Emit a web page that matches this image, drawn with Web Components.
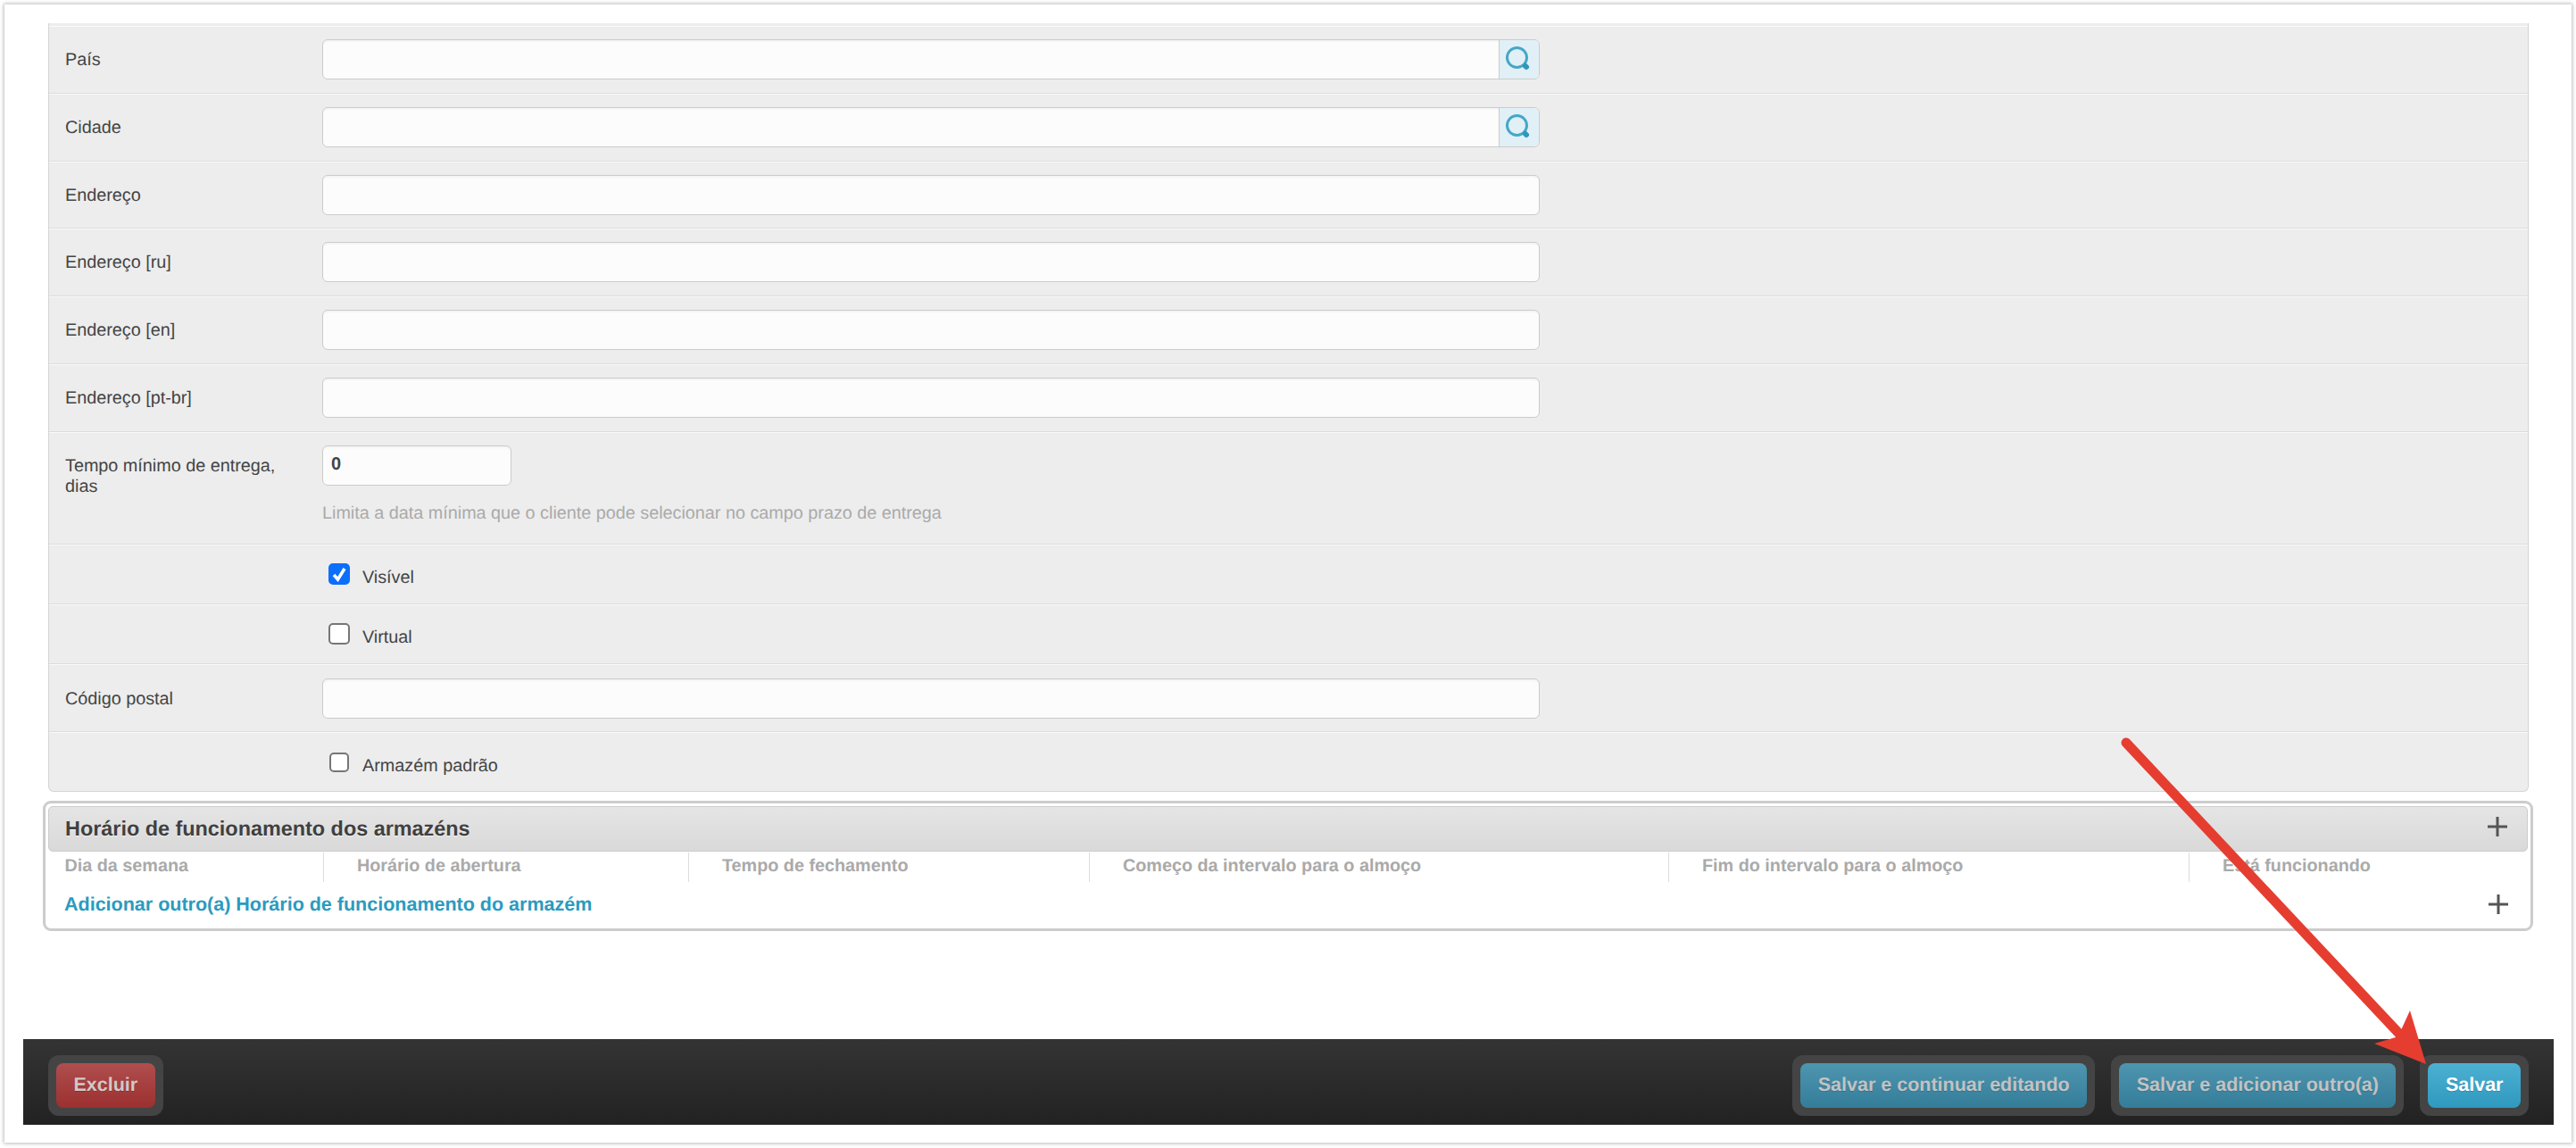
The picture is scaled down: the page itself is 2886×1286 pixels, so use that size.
<!DOCTYPE html>
<html lang="pt-BR">
<head>
<meta charset="utf-8">
<title>Armazém</title>
<style>
    html, body { margin: 0; padding: 0; background: #fff; }
    body { font-family: "Liberation Sans", Arial, sans-serif; font-size: 20px; color: #444; width: 2886px; height: 1286px; overflow: hidden; position: relative; text-rendering: geometricPrecision; }
</style>
</head>
<body>
<admin-page>
    <form-panel>
        <form-row label="País"><text-box lookup></text-box></form-row>
        <form-row label="Cidade"><text-box lookup></text-box></form-row>
        <form-row label="Endereço"><text-box></text-box></form-row>
        <form-row label="Endereço [ru]"><text-box></text-box></form-row>
        <form-row label="Endereço [en]"><text-box></text-box></form-row>
        <form-row label="Endereço [pt-br]"><text-box></text-box></form-row>
        <form-row label="Tempo mínimo de entrega, dias" size="126" help="Limita a data mínima que o cliente pode selecionar no campo prazo de entrega"><text-box small>0</text-box></form-row>
        <form-row size="67"><check-box checked>Visível</check-box></form-row>
        <form-row size="67"><check-box>Virtual</check-box></form-row>
        <form-row label="Código postal" style="padding-top: 15px"><text-box></text-box></form-row>
        <form-row size="66" last><check-box tiny>Armazém padrão</check-box></form-row>
    </form-panel>
    <inline-group title="Horário de funcionamento dos armazéns" link="Adicionar outro(a) Horário de funcionamento do armazém">
        <col-head width="308">Dia da semana</col-head>
        <col-head width="409">Horário de abertura</col-head>
        <col-head width="449">Tempo de fechamento</col-head>
        <col-head width="649">Começo da intervalo para o almoço</col-head>
        <col-head width="583">Fim do intervalo para o almoço</col-head>
        <col-head width="360">Está funcionando</col-head>
    </inline-group>
    <submit-bar>
        <action-button slot="left" kind="danger">Excluir</action-button>
        <action-button kind="dim">Salvar e continuar editando</action-button>
        <action-button kind="dim">Salvar e adicionar outro(a)</action-button>
        <action-button>Salvar</action-button>
    </submit-bar>
</admin-page>
<red-arrow></red-arrow>

<script>
(function() {

    function define(tag, css, html, init) {
        const template = document.createElement('template')
        template.innerHTML = `<style>${css}</style>${html}`

        class Element extends HTMLElement {
            constructor() {
                super()
                this.attachShadow({mode: 'open'})
                this.shadowRoot.appendChild(template.content.cloneNode(true))
            }
            connectedCallback() {
                if (init) init(this, this.shadowRoot)
            }
        }
        window.customElements.define(tag, Element)
    }

    const plus = `<svg width="22" height="22" viewBox="0 0 22 22"><path d="M0 11H22M11 0V22" stroke="#555" stroke-width="3" fill="none"/></svg>`

    define('admin-page', `
        :host {
            display: block;
            box-sizing: border-box;
            width: 2876px;
            height: 1275px;
            margin: 5px 0 0 5px;
            padding-top: 21px;
            background: #fff;
            box-shadow: 0 0 4px 1px #bbb;
        }
    `, `<slot></slot>`)

    define('form-panel', `
        :host {
            display: block;
            box-sizing: border-box;
            width: 2779px;
            height: 861px;
            margin-left: 49px;
            padding-top: 3px;
            background: #ededed;
            border: 1px solid #d4d4d4;
            border-top: 0;
            border-radius: 0 0 6px 6px;
        }
    `, `<slot></slot>`)

    define('form-row', `
        :host {
            display: flex;
            box-sizing: border-box;
            height: var(--row, 75.8px);
            padding: 14px 0 0 18px;
            border-top: 1px solid #fafafa;
            border-bottom: 1px solid #dcdcdc;
        }
        :host([last]) { border-bottom: 0; }
        .label {
            flex: none;
            box-sizing: border-box;
            width: 288px;
            padding: 12px 20px 0 0;
            font-size: 19.800px;
            line-height: 23px;
            color: #444;
        }
        .help {
            margin-top: 20px;
            font-size: 19.800px;
            line-height: 23px;
            color: #aaa;
        }
        .help:empty { display: none; }
    `, `<div class="label"></div><div class="field"><slot></slot><div class="help"></div></div>`, (el, root) => {
        root.querySelector('.label').textContent = el.getAttribute('label') || ''
        root.querySelector('.help').textContent = el.getAttribute('help') || ''
        if (el.hasAttribute('size')) el.style.setProperty('--row', el.getAttribute('size') + 'px')
    })

    define('text-box', `
        :host {
            display: flex;
            box-sizing: border-box;
            width: 1364px;
            height: 45px;
            overflow: hidden;
            background: #fcfcfc;
            border: 1px solid #cbcbcb;
            border-radius: 6px;
            box-shadow: inset 0 3px 3px -2px #eee;
        }
        :host([small]) { width: 212px; }
        .value {
            flex: 1;
            padding-left: 9px;
            font-size: 20px;
            font-weight: bold;
            line-height: 41px;
            color: #444;
        }
        .addon {
            display: none;
            flex: none;
            width: 44px;
            background: #e1f0f6;
            border-left: 1px solid #cbcbcb;
        }
        :host([lookup]) .addon { display: block; }
        svg { display: block; }
    `, `<div class="value"><slot></slot></div>
        <div class="addon"><svg width="44" height="43" viewBox="0 0 44 43">
            <circle cx="19.500" cy="19.500" r="11" fill="none" stroke="#45a7c8" stroke-width="3"/>
            <path d="M27.500 27.500L30 30" stroke="#45a7c8" stroke-width="3" fill="none"/>
            <path d="M29 29L30 30" stroke="#2f97ba" stroke-width="6" stroke-linecap="round" fill="none"/>
        </svg></div>`)

    define('check-box', `
        :host {
            display: flex;
            align-items: flex-start;
            padding: 6px 0 0 7px;
            font-size: 19.800px;
            line-height: 23px;
            color: #444;
        }
        .box {
            flex: none;
            box-sizing: border-box;
            width: 24px;
            height: 24px;
            margin-right: 14px;
            background: #fff;
            border: 2px solid #767676;
            border-radius: 5px;
        }
        :host([tiny]) { padding-left: 8px; padding-top: 8px; }
        :host([tiny]) .box { width: 22px; height: 22px; margin-right: 15px; }
        :host([checked]) .box { background: #0b6ffb; border-color: #0b6ffb; }
        svg { display: none; margin: -2px; }
        :host([checked]) svg { display: block; }
        .text { padding-top: 5px; }
        :host([tiny]) .text { padding-top: 4px; }
    `, `<div class="box"><svg width="24" height="24" viewBox="0 0 24 24"><path d="M6 13L10.500 18L18 6" fill="none" stroke="#fff" stroke-width="3.500"/></svg></div><div class="text"><slot></slot></div>`)

    define('inline-group', `
        :host {
            display: block;
            box-sizing: border-box;
            width: 2790px;
            height: 146px;
            margin: 10px 0 0 43px;
            padding: 3px 3px 0;
            border: 3px solid #ccc;
            border-radius: 9px;
        }
        .head {
            display: flex;
            align-items: center;
            justify-content: space-between;
            box-sizing: border-box;
            height: 51px;
            padding: 0 22px 0 18px;
            background: linear-gradient(#e5e5e5, #d9d9d9);
            border: 1px solid #ccc;
            border-radius: 5px;
        }
        .head svg { margin-bottom: 5px; }
        .title {
            font-size: 23.400px;
            font-weight: bold;
            color: #404040;
            text-shadow: 0 1px 0 #f4f4f4;
        }
        .cols { display: flex; height: 33px; margin-top: 1px; }
        .add {
            display: flex;
            align-items: center;
            justify-content: space-between;
            height: 50px;
            padding: 0 22px 0 18px;
        }
        .link {
            font-size: 21.500px;
            font-weight: bold;
            color: #2b9bc0;
        }
        svg { display: block; }
    `, `<div class="head"><span class="title"></span>${plus}</div>
        <div class="cols"><slot></slot></div>
        <div class="add"><span class="link"></span>${plus}</div>`, (el, root) => {
        root.querySelector('.title').textContent = el.getAttribute('title')
        root.querySelector('.link').textContent = el.getAttribute('link')
        el.removeAttribute('title')
    })

    define('col-head', `
        :host {
            display: block;
            box-sizing: border-box;
            flex: none;
            padding-left: 37px;
            font-size: 19.800px;
            font-weight: bold;
            line-height: 31px;
            color: #aaa;
            border-left: 1px solid #ddd;
        }
        :host(:first-child) { padding-left: 18.500px; border-left: 0; }
    `, `<slot></slot>`, (el) => {
        el.style.width = el.getAttribute('width') + 'px'
    })

    define('submit-bar', `
        :host {
            display: flex;
            justify-content: space-between;
            box-sizing: border-box;
            width: 2835px;
            height: 96px;
            margin: 121px 0 0 21px;
            padding: 18px 28px 0;
            background: linear-gradient(#343434, #222);
        }
        .right { display: flex; gap: 18px; }
    `, `<slot name="left"></slot><div class="right"><slot></slot></div>`)

    define('action-button', `
        :host {
            display: block;
            box-sizing: border-box;
            height: 68px;
            padding: 9px;
            background: #444;
            border-radius: 12px;
        }
        .btn {
            box-sizing: border-box;
            height: 50px;
            padding: 0 19.500px;
            font-size: 21.500px;
            font-weight: bold;
            line-height: 48px;
            color: #fff;
            text-shadow: 0 1px 0 rgba(0, 0, 0, .2);
            background: linear-gradient(#4db0d2, #2f99bf);
            border-radius: 8px;
        }
        :host([kind=dim]) .btn {
            color: #c2c2c2;
            background: linear-gradient(#4e95af, #347d99);
        }
        :host([kind=danger]) .btn {
            color: #d2c8c8;
            background: linear-gradient(#b04e4e, #9c3030);
        }
    `, `<div class="btn"><slot></slot></div>`)

    // the annotation lies over the page, so it is placed by coordinates
    define('red-arrow', `
        :host { position: absolute; left: 0; top: 0; pointer-events: none; }
        svg { display: block; }
    `, `<svg width="2886" height="1286" viewBox="0 0 2886 1286">
            <path d="M2382 832L2688 1158" stroke="#e53e30" stroke-width="11" stroke-linecap="round" fill="none"/>
            <path d="M2718 1192L2700 1132L2689.500 1155L2684 1162L2660 1169Z" fill="#e53e30"/>
        </svg>`)
}())
</script>
</body>
</html>
